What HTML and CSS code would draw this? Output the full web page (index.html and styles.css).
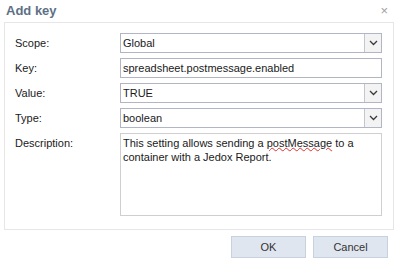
FILE: index.html
```html
<!DOCTYPE html>
<html>
<head>
<meta charset="utf-8">
<link rel="stylesheet" href="styles.css">
</head>
<body>
<div class="dialog">
  <div class="header">
    <span class="title">Add key</span>
    <span class="close">×</span>
  </div>
  <div class="panel">
    <div class="form">
      <label class="lbl">Scope:</label>
      <div class="field select"><span class="val">Global</span><span class="btn"><svg width="9" height="6" viewBox="0 0 9 6"><path d="M1 1 L4.5 4.5 L8 1" fill="none" stroke="#3a3a3a" stroke-width="1.3"/></svg></span></div>
      <label class="lbl">Key:</label>
      <div class="field"><span class="val">spreadsheet.postmessage.enabled</span></div>
      <label class="lbl">Value:</label>
      <div class="field select"><span class="val">TRUE</span><span class="btn"><svg width="9" height="6" viewBox="0 0 9 6"><path d="M1 1 L4.5 4.5 L8 1" fill="none" stroke="#3a3a3a" stroke-width="1.3"/></svg></span></div>
      <label class="lbl">Type:</label>
      <div class="field select"><span class="val">boolean</span><span class="btn"><svg width="9" height="6" viewBox="0 0 9 6"><path d="M1 1 L4.5 4.5 L8 1" fill="none" stroke="#3a3a3a" stroke-width="1.3"/></svg></span></div>
      <label class="lbl">Description:</label>
      <div class="area">This setting allows sending a <span class="spell">postMessage</span> to a<br>container with a Jedox Report.</div>
    </div>
  </div>
  <div class="footer">
    <button class="button">OK</button>
    <button class="button">Cancel</button>
  </div>
</div>
</body>
</html>
```

FILE: styles.css
```css
html, body {
  margin: 0;
  padding: 0;
  background: #ffffff;
}
body {
  font-family: "Liberation Sans", Arial, sans-serif;
  font-size: 11px;
  color: #1a1a1a;
}
.dialog {
  width: 399px;
  height: 267px;
  box-sizing: border-box;
  padding: 0 5px 0 4px;
}
.header {
  height: 22px;
  display: flex;
  align-items: center;
  justify-content: space-between;
  padding: 0 6px 0 2px;
}
.title {
  font-size: 13px;
  font-weight: bold;
  color: #5d7086;
  margin-top: -2px;
}
.close {
  font-size: 13px;
  color: #a0a0a0;
  margin-top: -2px;
}
.panel {
  border: 1px solid #e6e6e6;
  height: 208px;
  box-sizing: border-box;
  padding: 10px 11px 0 9px;
}
.form {
  display: grid;
  grid-template-columns: 106px 1fr;
  grid-template-rows: 20px 20px 20px 20px 83px;
  row-gap: 5px;
}
.lbl {
  display: flex;
  align-items: center;
  padding-left: 1px;
  color: #1a1a1a;
}
.form .lbl:last-of-type {
  align-items: flex-start;
  padding-top: 4px;
}
.field {
  border: 1px solid #b2b6c4;
  display: flex;
  align-items: center;
  box-sizing: border-box;
  background: #fff;
}
.val {
  flex: 1;
  padding-left: 2px;
}
.btn {
  width: 16px;
  height: 100%;
  border-left: 1px solid #c3c6d0;
  background: #f3f3f3;
  display: flex;
  align-items: center;
  justify-content: center;
}
.area {
  border: 1px solid #cfcfcf;
  box-sizing: border-box;
  padding: 2px 2px;
  line-height: 14px;
}
.spell {
  text-decoration: underline wavy #e03030;
  text-decoration-thickness: 1px;
  text-underline-offset: 0;
}
.footer {
  display: flex;
  justify-content: flex-end;
  gap: 7px;
  padding: 6px 6px 0 0;
}
.button {
  width: 75px;
  height: 22px;
  background: #dfe6ef;
  border: 1px solid #c8d2de;
  font-family: "Liberation Sans", Arial, sans-serif;
  font-size: 11px;
  color: #333;
  padding: 0;
}
```
